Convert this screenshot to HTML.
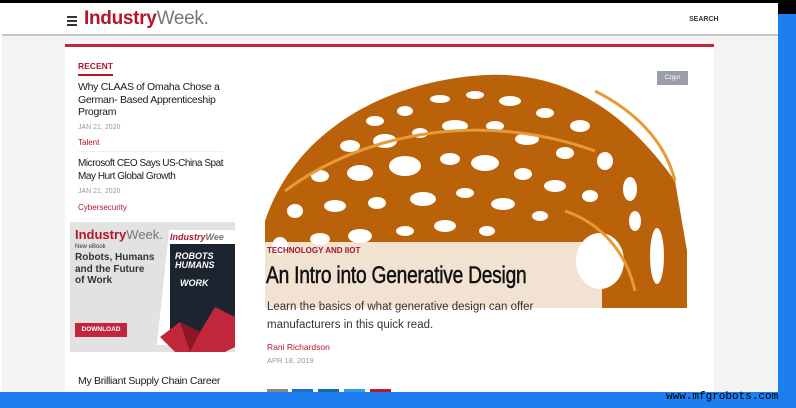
<!DOCTYPE html>
<html><head><style>
*{margin:0;padding:0;box-sizing:border-box}
body{width:796px;height:408px;overflow:hidden;background:#fff;font-family:"Liberation Sans",sans-serif;position:relative}
.top{position:absolute;left:0;top:0;width:796px;height:3px;background:#000}
.tr{position:absolute;left:778px;top:0;width:18px;height:14px;background:#000}
.br{position:absolute;left:778px;top:14px;width:18px;height:394px;background:#1e7ef0}
.bb{position:absolute;left:0;top:392px;width:796px;height:16px;background:#1e7ef0}
.win{position:absolute;left:2px;top:3px;width:776px;height:389px;background:#f4f4f4;overflow:hidden}
.hdr{position:absolute;left:0;top:0;width:776px;height:33px;background:#fff;border-bottom:2px solid #c8c8c8}
.ham{position:absolute;left:65px;top:13px;width:10px}
.ham i{display:block;height:2px;background:#333;margin-bottom:2px}
.logo{position:absolute;left:82px;top:5px;font-size:19px;font-weight:bold;color:#b5152b;letter-spacing:-0.3px}
.logo span{font-weight:normal;color:#777}
.search{position:absolute;left:687px;top:13px;font-size:7px;font-weight:bold;color:#333}
.main{position:absolute;left:63px;top:41px;width:649px;height:360px;background:#fff;border-top:3px solid #c1273b}
.rec{position:absolute;left:13px;top:14px;font-size:8.5px;font-weight:bold;color:#b5152b;border-bottom:2px solid #b5152b;padding-bottom:3px}
.it{position:absolute;left:13px;font-size:10.5px;line-height:12.5px;color:#1a1a1a;letter-spacing:-0.3px;white-space:nowrap}
.dt{font-size:7px;color:#999;margin-top:3px;letter-spacing:0}
.cat{font-size:8px;color:#b5152b;margin-top:3px;letter-spacing:0}
.ad{position:absolute;left:5px;top:175px;width:165px;height:130px;background:#e2e2e2;overflow:hidden}
.hero{position:absolute;left:200px;top:24px;width:422px;height:237px;background:#fff;overflow:hidden}
.cap{position:absolute;left:200px;top:195px;width:337px;height:66px;background:rgba(255,255,255,.82)}
.czg{position:absolute;left:592px;top:24px;width:31px;height:14px;background:#9a9ea6;color:#fff;font-size:6px;text-align:center;line-height:14px}
</style></head><body>
<div class="top"></div><div class="tr"></div><div class="br"></div><div class="bb"></div>
<div class="win">
<div class="hdr"><div class="ham"><i></i><i></i><i></i></div>
<div class="logo">Industry<span>Week.</span></div><div class="search">SEARCH</div></div>
<div class="main">
<div class="rec">RECENT</div>
<div class="it" style="top:34px">Why CLAAS of Omaha Chose a<br>German- Based Apprenticeship<br>Program<div class="dt">JAN 21, 2020</div><div class="cat">Talent</div></div>
<div class="it" style="top:104px;border-top:1px solid #eee;padding-top:6px;letter-spacing:-0.45px;font-size:10px">Microsoft CEO Says US-China Spat<br>May Hurt Global Growth<div class="dt">JAN 21, 2020</div><div class="cat">Cybersecurity</div></div>
<div class="ad">
<div style="position:absolute;left:5px;top:5px;font-size:13px;font-weight:bold;color:#b5152b">Industry<span style="font-weight:normal;color:#777">Week.</span></div>
<div style="position:absolute;left:5px;top:22px;font-size:6px;color:#333">New eBook</div>
<div style="position:absolute;left:5px;top:30px;font-size:10px;font-weight:bold;color:#333;line-height:11.5px">Robots, Humans<br>and the Future<br>of Work</div>
<div style="position:absolute;left:5px;top:101px;width:52px;height:14px;background:#c1273b;color:#fff;font-size:6.5px;font-weight:bold;text-align:center;line-height:14px">DOWNLOAD</div>
<div style="position:absolute;left:93px;top:8px;width:72px;height:115px;background:#fff;transform:skewX(-6deg)"></div>
<div style="position:absolute;left:100px;top:22px;width:65px;height:95px;background:#1c2430"></div>
<div style="position:absolute;left:100px;top:10px;font-size:9px;font-style:italic;font-weight:bold;color:#b5152b">Industry<span style="color:#777">Wee</span></div>
<div style="position:absolute;left:105px;top:30px;font-size:9px;font-style:italic;font-weight:bold;color:#fff;line-height:9px">ROBOTS<br>HUMANS<br><br>&nbsp;&nbsp;WORK</div>
<svg style="position:absolute;left:90px;top:80px" width="75" height="62"><polygon points="0,35 20,20 40,30 55,5 75,15 75,45 45,60 20,55" fill="#c1273b"/><polygon points="20,20 40,30 30,50" fill="#8e1526"/></svg>
</div>
<div class="it" style="top:328px">My Brilliant Supply Chain Career</div>
<div class="hero"><svg width="422" height="237" viewBox="0 0 422 237">
<path d="M0,150 C30,60 120,10 220,4 C300,0 360,40 410,110 L422,180 L422,237 L0,237 Z" fill="#b9620a"/>
<g fill="#fff">
<ellipse cx="110" cy="50" rx="9" ry="5"/><ellipse cx="140" cy="40" rx="8" ry="5"/><ellipse cx="175" cy="28" rx="10" ry="4"/><ellipse cx="210" cy="24" rx="9" ry="4"/><ellipse cx="245" cy="30" rx="11" ry="5"/><ellipse cx="280" cy="42" rx="9" ry="5"/><ellipse cx="315" cy="55" rx="10" ry="6"/>
<ellipse cx="85" cy="75" rx="10" ry="6"/><ellipse cx="120" cy="70" rx="12" ry="7"/><ellipse cx="155" cy="62" rx="8" ry="5"/><ellipse cx="190" cy="55" rx="13" ry="6"/><ellipse cx="230" cy="55" rx="9" ry="5"/><ellipse cx="262" cy="68" rx="12" ry="6"/><ellipse cx="300" cy="82" rx="9" ry="6"/><ellipse cx="340" cy="90" rx="8" ry="9"/>
<ellipse cx="55" cy="105" rx="9" ry="6"/><ellipse cx="95" cy="102" rx="13" ry="8"/><ellipse cx="140" cy="95" rx="16" ry="10"/><ellipse cx="185" cy="88" rx="10" ry="6"/><ellipse cx="220" cy="92" rx="14" ry="8"/><ellipse cx="258" cy="103" rx="9" ry="6"/><ellipse cx="290" cy="115" rx="11" ry="6"/><ellipse cx="325" cy="125" rx="8" ry="6"/><ellipse cx="365" cy="118" rx="7" ry="12"/>
<ellipse cx="30" cy="140" rx="8" ry="7"/><ellipse cx="70" cy="135" rx="11" ry="6"/><ellipse cx="112" cy="132" rx="9" ry="6"/><ellipse cx="158" cy="128" rx="13" ry="7"/><ellipse cx="200" cy="122" rx="9" ry="5"/><ellipse cx="238" cy="133" rx="12" ry="6"/><ellipse cx="275" cy="145" rx="8" ry="5"/>
<ellipse cx="15" cy="175" rx="8" ry="9"/><ellipse cx="55" cy="168" rx="10" ry="6"/><ellipse cx="95" cy="165" rx="12" ry="7"/><ellipse cx="140" cy="160" rx="9" ry="5"/><ellipse cx="180" cy="155" rx="11" ry="6"/><ellipse cx="222" cy="160" rx="8" ry="5"/>
<ellipse cx="335" cy="190" rx="24" ry="28"/><ellipse cx="392" cy="185" rx="7" ry="28"/><ellipse cx="370" cy="150" rx="6" ry="10"/>
</g>
<g stroke="#e89a34" stroke-width="3" fill="none">
<path d="M330,20 C370,40 400,70 410,110"/>
<path d="M20,120 C100,60 220,40 330,80"/>
<path d="M300,140 C330,150 360,175 370,220"/>
</g>
</svg></div>
<div class="cap"></div>
<div class="czg">Czgur</div>
<div style="position:absolute;left:202px;top:199px;font-size:8px;font-weight:bold;color:#a3162b">TECHNOLOGY AND IIOT</div>
<div style="position:absolute;left:201px;top:215px;font-size:24px;color:#111;transform:scaleX(0.8);transform-origin:left;white-space:nowrap;letter-spacing:-0.3px;-webkit-text-stroke:0.5px #111">An Intro into Generative Design</div>
<div style="position:absolute;left:202px;top:251px;font-size:11.5px;color:#333;line-height:18px">Learn the basics of what generative design can offer<br>manufacturers in this quick read.</div>
<div style="position:absolute;left:202px;top:295px;font-size:8.5px;color:#b5152b">Rani Richardson</div>
<div style="position:absolute;left:202px;top:309px;font-size:7.5px;color:#999">APR 18, 2019</div>
<div style="position:absolute;left:202px;top:342px;width:21px;height:6px;background:#888"></div>
<div style="position:absolute;left:227px;top:342px;width:21px;height:6px;background:#1e6fc9"></div>
<div style="position:absolute;left:253px;top:342px;width:21px;height:6px;background:#1a6aa8"></div>
<div style="position:absolute;left:279px;top:342px;width:21px;height:6px;background:#2aa3e0"></div>
<div style="position:absolute;left:305px;top:342px;width:21px;height:6px;background:#c1162b"></div>
</div>
</div>
<div style="position:absolute;left:666px;top:391px;font-family:'Liberation Mono',monospace;font-size:11px;color:#000">www.mfgrobots.com</div>
</body></html>
